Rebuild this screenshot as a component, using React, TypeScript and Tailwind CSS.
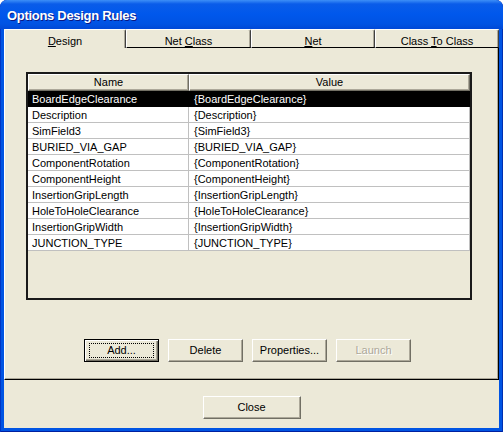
import React from 'react';

const rules = [
  'BoardEdgeClearance',
  'Description',
  'SimField3',
  'BURIED_VIA_GAP',
  'ComponentRotation',
  'ComponentHeight',
  'InsertionGripLength',
  'HoleToHoleClearance',
  'InsertionGripWidth',
  'JUNCTION_TYPE',
];

function Tab({ label, width, selected }: { label: React.ReactNode; width: string; selected?: boolean }) {
  return (
    <div
      className={`${width} h-[19px] flex justify-center pt-[5px] leading-[13px] border-t border-l border-white border-r border-r-[#404040] rounded-t-[2px] shadow-[inset_-1px_0_#aca899] ${
        selected ? '' : 'border-b border-b-black'
      }`}
    >
      {label}
    </div>
  );
}

function Button({ children, width = 'w-[75px]', isDefault, disabled }: { children: React.ReactNode; width?: string; isDefault?: boolean; disabled?: boolean }) {
  return (
    <div
      className={`${width} h-[23px] flex items-center justify-center bg-[#ece9d8] ${
        isDefault
          ? 'border border-black shadow-[inset_1px_1px_#fff,inset_-1px_-1px_#716f64,inset_-2px_-2px_#aca899]'
          : 'border border-t-white border-l-white border-r-[#716f64] border-b-[#716f64] shadow-[inset_-1px_-1px_#aca899]'
      }`}
    >
      {isDefault ? (
        <span className="w-[65px] h-[15px] flex items-center justify-center border border-dotted border-black">{children}</span>
      ) : (
        <span className={disabled ? 'text-[#aca899] [text-shadow:1px_1px_#fff]' : ''}>{children}</span>
      )}
    </div>
  );
}

export default function App() {
  return (
    <div className="w-[503px] h-[432px] flex flex-col rounded-t-[7px] bg-[#0054e3] shadow-[inset_1px_0_#0035c5,inset_-1px_0_#002fb0,inset_0_-1px_#0020a0] font-['Liberation_Sans',Arial,sans-serif] text-[11px] text-black overflow-hidden">
      {/* title bar */}
      <div className="h-[29px] flex items-center pl-[7px] pt-[3px] rounded-t-[7px] bg-[linear-gradient(180deg,#3d8ff7_0px,#0a5ce9_4px,#0058ec_14px,#0053e3_24px,#0048d6_29px)]">
        <span className="text-white font-bold text-[13px] tracking-[-0.3px] [text-shadow:1px_1px_#0a1883]">Options Design Rules</span>
      </div>

      <div className="flex-1 mx-[4px] mb-[4px] bg-[#ece9d8] flex flex-col">
        {/* tabs */}
        <div className="flex">
          <Tab width="w-[122px]" selected label={<span><u>D</u>esign</span>} />
          <Tab width="w-[125px]" label={<span>Net <u>C</u>lass</span>} />
          <Tab width="w-[124px]" label={<span><u>N</u>et</span>} />
          <Tab width="w-[124px]" label={<span>Class <u>T</u>o Class</span>} />
        </div>

        {/* tab page */}
        <div className="h-[332px] border-l border-l-white border-r border-r-black border-b border-b-black shadow-[inset_-1px_-1px_#aca899] pt-[24px] pl-[21px]">
          <div className="w-[446px] h-[228px] border-2 border-[#1a1a1a] bg-[#ece9d8] flex flex-col">
            <div className="flex h-[17px] leading-[15px]">
              <div className="w-[161px] text-center border border-t-white border-l-white border-r-[#716f64] border-b-[#716f64] shadow-[inset_-1px_-1px_#aca899]">Name</div>
              <div className="w-[281px] text-center border border-t-white border-l-white border-r-[#716f64] border-b-[#716f64] shadow-[inset_-1px_-1px_#aca899]">Value</div>
            </div>
            {rules.map((name, i) => {
              const sel = i === 0;
              return (
                <div key={name} className={`flex h-[16px] leading-[16px] ${sel ? 'bg-black text-white' : 'bg-white'}`}>
                  <div className={`w-[161px] pl-[4px] border-b border-r ${sel ? 'border-black' : 'border-[#c0c0c0]'}`}>{name}</div>
                  <div className={`w-[281px] pl-[5px] border-b border-r ${sel ? 'border-black' : 'border-[#c0c0c0]'}`}>{`{${name}}`}</div>
                </div>
              );
            })}
          </div>

          <div className="flex gap-[9px] mt-[39px] ml-[58px]">
            <Button isDefault>Add...</Button>
            <Button>Delete</Button>
            <Button>Properties...</Button>
            <Button disabled>Launch</Button>
          </div>
        </div>

        {/* footer */}
        <div className="flex-1 flex justify-center pt-[16px]">
          <Button width="w-[98px]">Close</Button>
        </div>
      </div>
    </div>
  );
}
